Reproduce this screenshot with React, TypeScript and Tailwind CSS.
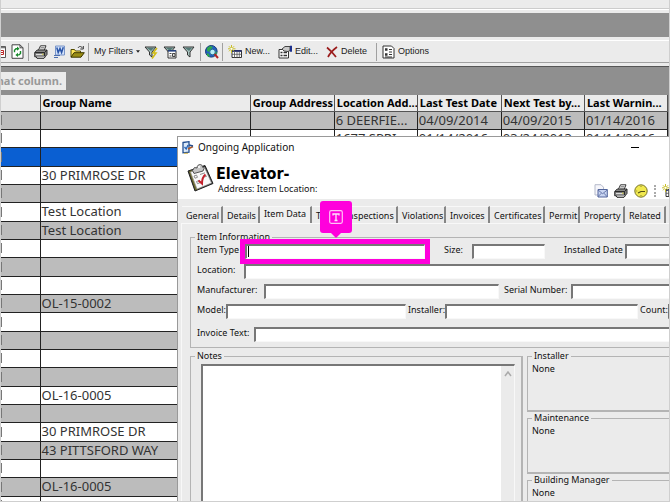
import type { ReactNode } from "react";
import { clsx } from "clsx";

const columns = [
  { title: "", width: "w-[39px]" },
  { title: "Group Name", width: "w-[210px]" },
  { title: "Group Address", width: "w-[84px]" },
  { title: "Location Add...", width: "w-[83px]" },
  { title: "Last Test Date", width: "w-[84px]" },
  { title: "Next Test by...", width: "w-[83px]" },
  { title: "Last Warnin...", width: "w-[83px]" },
];

const rows = [
  ["", "", "6 DEERFIE...", "04/09/2014", "04/09/2015", "01/14/2016"],
  ["", "", "1677 SPRI...", "01/14/2016", "03/24/2013", "01/14/2016"],
  [],
  ["30 PRIMROSE DR"],
  [],
  ["Test Location"],
  ["Test Location"],
  [],
  [],
  [],
  ["OL-15-0002"],
  [],
  [],
  [],
  [],
  ["OL-16-0005"],
  [],
  ["30 PRIMROSE DR"],
  ["43 PITTSFORD WAY"],
  [],
  ["OL-16-0005"],
  ["30 PRIMROSE DR"],
];

const SELECTED_ROW = 2;

const tabs = [
  { label: "General", width: "w-[41px]" },
  { label: "Details", width: "w-[37px]" },
  { label: "Item Data", width: "w-[52px]", active: true },
  { label: "Tests", width: "w-[29px]" },
  { label: "Inspections", width: "w-[57px]" },
  { label: "Violations", width: "w-[48px]" },
  { label: "Invoices", width: "w-[44px]" },
  { label: "Certificates", width: "w-[55px]" },
  { label: "Permit", width: "w-[35px]" },
  { label: "Property", width: "w-[45px]" },
  { label: "Related", width: "w-[41px]" },
];

function PrinterIcon() {
  return (
    <svg viewBox="0 0 14 14" className="size-3.5 shrink-0">
      <path d="M4.5 5 L6.5 .8 H12 L10.3 5" fill="#fff" stroke="#333" />
      <path d="M6.5 2.5h4M6 4h4" stroke="#777" strokeWidth=".8" />
      <path d="M.7 7.5 L3.2 5 H13 V9.5 L11 11.8 H.7Z" fill="#888" stroke="#333" />
      <path d="M1 7.6h9.5L13 5.2M10.6 7.6v4" stroke="#222" fill="none" />
      <path d="M2 9.5h7" stroke="#ddd" />
      <path d="M2 11.5 L3 13.3h7l1.5-1.8" fill="#ddd" stroke="#222" />
      <path d="M8 9.2h1.5" stroke="#d2cc30" />
    </svg>
  );
}

function CalendarIcon() {
  return (
    <svg viewBox="0 0 5 14" className="h-3.5 w-[5px] shrink-0">
      <path d="M0 1.5h4.5v11H0" fill="#fff" stroke="#555" />
      <path d="M0 2.5h4" stroke="#777" strokeWidth="1.6" />
      <path d="M0 5.5h2.5v2H0M2.5 7.5v2H0" fill="none" stroke="#b22" />
    </svg>
  );
}

function RefreshIcon() {
  return (
    <svg viewBox="0 0 13 15" className="h-[15px] w-[13px] shrink-0">
      <path d="M1 .8h8l3 3v10.5H1z" fill="#fff" stroke="#444" />
      <path d="M9 .8v3h3" fill="none" stroke="#444" />
      <path d="M3.5 8.3V6.2l1.5-1.5h1.5" fill="none" stroke="#178a2b" strokeWidth="1.4" />
      <path d="M6 2.6 8.6 4.7 6 6.7z" fill="#178a2b" />
      <path d="M9.5 7v2.4L8 10.9H6.5" fill="none" stroke="#178a2b" strokeWidth="1.4" />
      <path d="M7 8.8 4.4 10.9 7 13z" fill="#178a2b" />
    </svg>
  );
}

function WordIcon() {
  return (
    <svg viewBox="0 0 12 14" className="h-3.5 w-3 shrink-0">
      <path d="M2.5 1h9v9h-9z" fill="#d3e2fa" stroke="#7894c8" />
      <path d="M3.8 2.5 5.2 7.5 7 3.5 8.6 7.5 10.3 2.3" fill="none" stroke="#2a55a8" strokeWidth="1.5" />
      <path d="M1 10.5h6M1 12.5h4" stroke="#4e6fae" />
    </svg>
  );
}

function FolderIcon() {
  return (
    <svg viewBox="0 0 15 14" className="h-3.5 w-[15px] shrink-0">
      <path d="M8 3c1-2 3-2 4.5 0M13.3 1v3h-3" fill="none" stroke="#333" />
      <path d="M1 12V4.5h3.5l1 1.5h5V8" fill="#ffe65a" stroke="#554d00" />
      <path d="M1 12.2 4 7.7h10.3L11 12.2z" fill="#9a8d14" stroke="#3c3700" />
    </svg>
  );
}

function Funnel({ children }: { children?: ReactNode }) {
  return (
    <svg viewBox="0 0 14 14" className="size-3.5 shrink-0">
      <path d="M1 2h11L8 7v5L5.5 10V7z" fill="#a8c4c0" stroke="#333" />
      <path d="M3 3h7L7 6z" fill="#547a76" />
      {children}
    </svg>
  );
}

function GlobeIcon() {
  return (
    <svg viewBox="0 0 14 14" className="size-3.5 shrink-0">
      <circle cx="6.3" cy="6.3" r="5.8" fill="#235fc4" stroke="#143c74" />
      <path d="M2 3 5 1l3 1-2 2-2 3-2-1zM8 8l3-2 1 2-2 3zM2 8l2 1 1 3-3-1z" fill="#2da84c" />
      <circle cx="7.5" cy="7" r="2.8" fill="#b9eff7" stroke="#276c93" />
      <path d="m9.6 9.2 3.4 3.8" stroke="#b52222" strokeWidth="2" />
    </svg>
  );
}

function NewIcon() {
  return (
    <svg viewBox="0 0 15 14" className="h-3.5 w-[15px] shrink-0">
      <path d="M4 5.5h9.5v7H4z" fill="#fff" stroke="#333" />
      <path d="M4 6h9.5" stroke="#28306e" strokeWidth="1.8" />
      <path d="M6.5 7v5.5M9 7v5.5M11.3 7v5.5M4 9.3h9.5" stroke="#555" strokeWidth=".8" />
      <path d="M3.5 0v8M0 3.8h7.5M1 1.3l5 5M6 1.3l-5 5" stroke="#c9bf28" />
      <circle cx="3.5" cy="3.8" r="1.1" fill="#fff" />
    </svg>
  );
}

function EditIcon() {
  return (
    <svg viewBox="0 0 15 14" className="h-3.5 w-[15px] shrink-0">
      <path d="M1 4.5h9.5v8.5H1z" fill="#fff" stroke="#333" />
      <path d="M2.5 7.5h2M2.5 10.5h2M5.5 7.5h3.5M5.5 10.5h3.5" stroke="#333" strokeWidth="1.3" />
      <path d="M4 4 7 1.5h5v4l-2 1-4-.5z" fill="#c9c9c9" stroke="#444" />
      <path d="M12 .8h2v6h-2z" fill="#1b2f8c" />
    </svg>
  );
}

function DeleteIcon() {
  return (
    <svg viewBox="0 0 12 12" className="size-3 shrink-0">
      <path d="M1 1.5C4 4 7 7 10 11M11 1C7 4 4 7 2 11" fill="none" stroke="#9b1c1c" strokeWidth="1.7" />
    </svg>
  );
}

function OptionsIcon() {
  return (
    <svg viewBox="0 0 13 14" className="h-3.5 w-[13px] shrink-0">
      <path d="M1 1h8.5L12 3.5V13H1z" fill="#fff" stroke="#333" />
      <path d="M3 3.3h2.5v2.4H3zM3 8.3h2.5v2.4H3z" fill="#333" />
      <path d="M7 4.5h3M7 7h3M7 9.5h3M3 12h7" stroke="#333" />
    </svg>
  );
}

function Divider() {
  return <span className="h-[18px] w-px shrink-0 bg-[#a0a0a0]" />;
}

function ToolButton({ label, children }: { label: string; children: ReactNode }) {
  return (
    <button type="button" aria-label={label} className="flex shrink-0 items-center">
      {children}
    </button>
  );
}

function Toolbar() {
  return (
    <div className="flex h-[23px] items-center overflow-hidden border-t border-b border-t-white border-b-[#a0a0a0] bg-[#ebebeb] font-[Liberation_Sans,sans-serif] text-[9px] whitespace-nowrap text-[#222]">
      <div className="flex w-[27px] shrink-0 items-center gap-[5px]">
        <ToolButton label="Calendar"><CalendarIcon /></ToolButton>
        <ToolButton label="Refresh"><RefreshIcon /></ToolButton>
      </div>
      <Divider />
      <div className="flex w-[59px] shrink-0 items-center gap-[5px] pl-[5px]">
        <ToolButton label="Print"><PrinterIcon /></ToolButton>
        <ToolButton label="Export to Word"><WordIcon /></ToolButton>
        <ToolButton label="Open"><FolderIcon /></ToolButton>
      </div>
      <Divider />
      <button type="button" className="flex w-[51px] shrink-0 items-center gap-[3px] pl-[5px]">
        My Filters
        <svg viewBox="0 0 5 3" className="h-[3px] w-[5px]"><path d="M0 0h5L2.5 3z" fill="#222" /></svg>
      </button>
      <div className="flex w-[60px] shrink-0 items-center gap-[5px] pl-1">
        <ToolButton label="Quick filter">
          <Funnel><path d="m13 3-4 5h3l-4 5.5" fill="none" stroke="#d1bd16" strokeWidth="1.6" /></Funnel>
        </ToolButton>
        <ToolButton label="Filter form">
          <Funnel>
            <path d="M5 5.5h8V13H5z" fill="#fff" stroke="#333" />
            <path d="M5 5.8h8" stroke="#24407e" strokeWidth="1.6" />
            <path d="M6.5 8.5h2M6.5 11h2M9.5 8.5H12v3H9.5z" stroke="#444" fill="#ddd" />
          </Funnel>
        </ToolButton>
        <ToolButton label="Filter"><Funnel /></ToolButton>
      </div>
      <Divider />
      <div className="flex w-[21px] shrink-0 items-center pl-1">
        <ToolButton label="Find"><GlobeIcon /></ToolButton>
      </div>
      <Divider />
      <div className="flex w-[153px] shrink-0 items-center gap-2 pl-[5px]">
        <button type="button" className="flex w-[42px] items-center gap-0.5"><NewIcon />New...</button>
        <button type="button" className="flex w-[40px] items-center gap-0.5"><EditIcon />Edit...</button>
        <button type="button" className="flex items-center gap-[3px]"><DeleteIcon />Delete</button>
      </div>
      <Divider />
      <button type="button" className="flex items-center gap-[3px] pl-[5px]"><OptionsIcon />Options</button>
    </div>
  );
}

function Grid() {
  return (
    <table className="w-[667px] table-fixed border-collapse bg-white">
      <thead>
        <tr className="h-4 bg-[#ebebeb] text-left text-[11px] leading-[14px] text-black">
          {columns.map((column) => (
            <th key={column.title} className={clsx("overflow-hidden border-r border-b border-[#555] p-0 pl-0.5 whitespace-nowrap", column.width)}>
              {column.title}
            </th>
          ))}
        </tr>
      </thead>
      <tbody>
        {rows.map((row, index) => (
          <tr
            key={index}
            className={clsx(
              index % 3 === 2 ? "h-[19px]" : "h-[18px]",
              index === SELECTED_ROW ? "bg-[#0a5fd2]" : index % 2 === 0 ? "bg-[#bcbcbc]" : "bg-white",
            )}
          >
            <td className="border-r border-b border-[#222] p-0">
              <div className="h-2.5 w-px bg-[#777]" />
            </td>
            {[0, 1, 2, 3, 4, 5].map((cell) => (
              <td key={cell} className="overflow-hidden border-r border-b border-[#222] p-0 pl-px text-[13px] leading-[17px] whitespace-nowrap text-[#333]">
                {row[cell]}
              </td>
            ))}
          </tr>
        ))}
      </tbody>
    </table>
  );
}

function Field({ id, label, labelWidth, inputWidth, children }: {
  id: string;
  label: string;
  labelWidth: string;
  inputWidth: string;
  children?: ReactNode;
}) {
  return (
    <div className={clsx("flex items-start", inputWidth === "flex-1" && "flex-1")}>
      <label htmlFor={id} className={clsx("shrink-0 leading-3 whitespace-nowrap", labelWidth)}>{label}</label>
      <div className={clsx("relative", inputWidth)}>
        <input
          id={id}
          type="text"
          className="block h-[15px] w-full border-t-2 border-r border-b border-l-2 border-t-[#777] border-r-[#f8f8f8] border-b-[#f8f8f8] border-l-[#777] bg-white outline-none"
        />
        {children}
      </div>
    </div>
  );
}

function Callout() {
  return (
    <>
      <div className="absolute -inset-[5px] border-[5px] border-[#ff00dc]" />
      <div className="absolute top-[2px] left-[3px] h-[11px] w-px bg-black" />
      <div className="absolute -top-[43px] left-[75px] flex size-8 items-center justify-center rounded-[3px] bg-[#ff00dc]">
        <svg viewBox="0 0 14 14" className="size-3.5">
          <rect x=".7" y=".7" width="12.6" height="12.6" rx="1.5" fill="none" stroke="#ffc4f6" strokeWidth="1.2" />
          <path d="M4 5.5V4h6v1.5M7 4v6.5M5.5 10.5h3" fill="none" stroke="#ffe3fb" strokeWidth="1.3" />
        </svg>
        <svg viewBox="0 0 10 5" className="absolute top-8 left-[11px] h-[5px] w-2.5">
          <path d="M0 0h10L5 5z" fill="#ff00dc" />
        </svg>
      </div>
    </>
  );
}

function Panel({ title, className, children }: { title: string; className: string; children: ReactNode }) {
  return (
    <fieldset className={clsx("min-w-0 border border-[#b4b4b4]", className)}>
      <legend className="ml-1 px-0.5 leading-3">{title}</legend>
      {children}
    </fieldset>
  );
}

function ItemInformation() {
  return (
    <Panel title="Item Information" className="h-[117px]">
      <div className="pl-1.5">
        <div className="flex h-5 gap-[19px] pt-px">
          <Field id="item-type" label="Item Type" labelWidth="w-[48px]" inputWidth="w-[180px]">
            <Callout />
          </Field>
          <Field id="size" label="Size:" labelWidth="w-[28px]" inputWidth="w-[73px]" />
          <Field id="installed" label="Installed Date" labelWidth="w-[61px]" inputWidth="flex-1" />
        </div>
        <div className="flex h-5 pt-px">
          <Field id="location" label="Location:" labelWidth="w-[47px]" inputWidth="flex-1" />
        </div>
        <div className="flex h-5 gap-[5px] pt-px">
          <Field id="manufacturer" label="Manufacturer:" labelWidth="w-[67px]" inputWidth="w-[235px]" />
          <Field id="serial" label="Serial Number:" labelWidth="w-[67px]" inputWidth="flex-1" />
        </div>
        <div className="flex h-[23px] gap-0.5 pt-px">
          <Field id="model" label="Model:" labelWidth="w-[29px]" inputWidth="w-[180px]" />
          <Field id="installer" label="Installer:" labelWidth="w-[37px]" inputWidth="w-[193px]" />
          <Field id="count" label="Count:" labelWidth="w-[28px]" inputWidth="flex-1" />
        </div>
        <div className="flex h-5 pt-px">
          <Field id="invoice" label="Invoice Text:" labelWidth="w-[57px]" inputWidth="flex-1" />
        </div>
      </div>
    </Panel>
  );
}

function DialogHeader() {
  return (
    <header className="h-[62px] bg-white">
      <div className="flex h-5 items-center gap-1 pl-[3px]">
        <svg viewBox="0 0 13 13" className="size-[13px]">
          <path d="M2 1.5 8 .7v10.5l-6 .6z" fill="#dceafa" stroke="#234f91" strokeWidth="1.3" />
          <path d="m3.5 6 1.7 2L7 4" fill="none" stroke="#2865b8" strokeWidth="1.3" />
          <path d="m7 8 5-2.5" stroke="#b05a28" strokeWidth="1.8" />
          <path d="m8 4 4 1" stroke="#234f91" strokeWidth="1.5" />
          <path d="M3 12.3h4" stroke="#d6b64a" />
        </svg>
        <span className="flex-1 text-[10px]">Ongoing Application</span>
        <button type="button" aria-label="Minimize" className="mr-[70px] w-2 py-1">
          <span className="block h-px bg-black" />
        </button>
      </div>
      <div className="flex items-start pt-[7px] pl-2">
        <svg viewBox="0 0 28 29" className="h-[29px] w-7">
          <path d="m2 7 17-5.5 8 18L9 27z" fill="#333" stroke="#222" strokeLinejoin="round" />
          <path d="m3 7.5 3-1.3 8.5 17.5-5 2.5z" fill="#71702e" />
          <path d="m4.5 8 14-4.5L25.5 19l-14.5 6z" fill="#fafafa" stroke="#999" strokeWidth=".7" />
          <path d="m6.5 6.5 2-3 2.5.5c0-4 5-5 5.5-1l1.5 1.5-1 2.5-9 2.5z" fill="#c6c6c6" stroke="#555" />
          <circle cx="13" cy="3" r="1" fill="#fff" />
          <path d="m8 12 2.5-.9 1 2.2-2.5.9zM10.5 17.5l2.5-1 1 2.2-2.5 1zM14 10.5l5-1.7M18.5 13l2.5-1" fill="none" stroke="#8f8f8f" />
          <path d="m12.5 16.5 3.5 3c0-4 1-7 3.5-9" fill="none" stroke="#c3202b" strokeWidth="2" />
        </svg>
        <div className="flex-1 pl-0.5">
          <h1 className="font-[DejaVu_Sans_Condensed,DejaVu_Sans,sans-serif] text-[16px] leading-[20px] font-bold text-black">Elevator-</h1>
          <p className="pl-0.5 text-[9px] leading-[9px]">Address: Item Location:</p>
        </div>
        <div className="mr-8 flex items-center gap-[6px] pt-5">
          <ToolButton label="Email">
            <svg viewBox="0 0 14 14" className="size-3.5">
              <path d="M1 .7h6l2.5 2.5V11H1z" fill="#f6f6fb" stroke="#b5bacb" />
              <path d="M4 5.5h9.3v7.5H4z" fill="#c9d5f2" stroke="#52659c" />
              <path d="m4 6 4.6 3.7L13.3 6M4 12.7l3.3-3.5M13 12.7 10 9.2" fill="none" stroke="#52659c" strokeWidth=".8" />
            </svg>
          </ToolButton>
          <ToolButton label="Print item"><PrinterIcon /></ToolButton>
          <ToolButton label="Schedule">
            <svg viewBox="0 0 14 14" className="size-3.5">
              <circle cx="7" cy="7" r="6.2" fill="#f1e94f" stroke="#77732a" />
              <path d="m4 9 3-1.5h4" fill="none" stroke="#554f18" strokeWidth="1.2" />
              <path d="M7 2v1M2.2 7h1M7 11v1" stroke="#8a8534" />
            </svg>
          </ToolButton>
          <span className="h-3 w-0.5 border-l-2 border-dotted border-[#aaa]" />
          <ToolButton label="New item"><NewIcon /></ToolButton>
        </div>
      </div>
    </header>
  );
}

function ItemDialog() {
  return (
    <section className="absolute top-[136px] -right-10 bottom-0 left-[176px] flex flex-col overflow-hidden border-t border-l border-[#999] bg-[#ebebeb] text-[9px] text-[#111]">
      <DialogHeader />
      <nav role="tablist" className="mt-[7px] flex h-[17px] shrink-0 pl-1">
        {tabs.map((tab) => (
          <button
            key={tab.label}
            type="button"
            role="tab"
            aria-selected={!!tab.active}
            className={clsx(
              "shrink-0 border-t border-r-2 border-t-[#f8f8f8] border-r-[#858585] pl-1 text-left whitespace-nowrap",
              tab.width,
              tab.active ? "bg-[#f0f0f0] pb-0.5" : "pt-px",
            )}
          >
            {tab.label}
          </button>
        ))}
      </nav>
      <div className="ml-[3px] flex min-h-0 flex-1 flex-col border-t border-l border-[#f8f8f8] pt-[7px] pl-2">
        <ItemInformation />
        <div className="flex min-h-0 flex-1 items-start gap-1 pt-0.5">
          <Panel title="Notes" className="h-[400px] w-[333px] shrink-0 border-r-2">
            <div className="h-full pt-0.5 pr-1.5 pl-2.5">
              <div className="flex h-full border-t-2 border-r border-l-2 border-t-[#777] border-r-[#f8f8f8] border-l-[#777]">
                <textarea aria-label="Notes" className="min-w-0 flex-1 resize-none bg-white outline-none" />
                <div className="flex w-[13px] justify-center bg-[#ebebeb] pt-[5px]">
                  <svg viewBox="0 0 8 6" className="h-1.5 w-2"><path d="m1 5 3-4 3 4" fill="none" stroke="#aaa" strokeWidth="1.5" /></svg>
                </div>
              </div>
            </div>
          </Panel>
          <div className="flex flex-1 flex-col">
            <Panel title="Installer" className="h-[62px] border-b-2">
              <p className="pt-px pl-1 leading-3">None</p>
            </Panel>
            <Panel title="Maintenance" className="h-[62px] border-b-2">
              <p className="pt-px pl-1 leading-3">None</p>
            </Panel>
            <Panel title="Building Manager" className="h-[62px] border-b-2">
              <p className="pt-px pl-1 leading-3">None</p>
            </Panel>
          </div>
        </div>
      </div>
    </section>
  );
}

export default function App() {
  return (
    <main className="relative h-screen overflow-hidden border-x border-b border-[#cfcfcf] bg-[#8f8f8f] font-[Noto_Sans,sans-serif]">
      <div className="h-[13px] bg-[#ebebeb] pt-2">
        <div className="h-0.5 border-t border-b border-t-[#ccc] border-b-white" />
      </div>
      <div className="mt-6 bg-[#ebebeb] pt-[3px]">
        <Toolbar />
        <div className="h-1 border-b border-[#555]" />
      </div>
      <div className="py-[5px]">
        <div className="flex h-[18px] w-[65px] items-center justify-end bg-[#ebebeb] pr-1 text-[11px] font-bold whitespace-nowrap text-[#999]">
          hat column.
        </div>
      </div>
      <Grid />
      <ItemDialog />
    </main>
  );
}
